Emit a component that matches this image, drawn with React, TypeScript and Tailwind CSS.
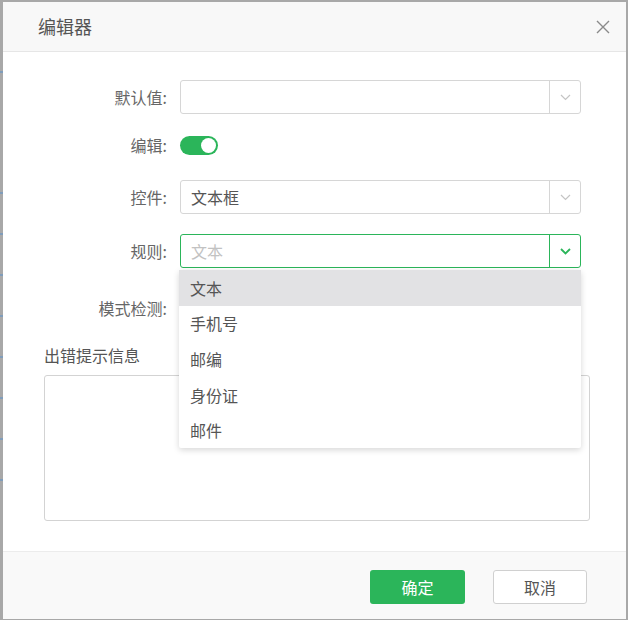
import React from "react";

const FONT = { fontFamily: '"Noto Sans CJK SC", "Noto Sans", sans-serif' };

const RULE_OPTIONS = ["文本", "手机号", "邮编", "身份证", "邮件"];

function Chevron({ active = false }: { active?: boolean }) {
  return (
    <svg width="11" height="7" viewBox="0 0 11 7" fill="none">
      <path
        d="M1 1l4.5 4.5L10 1"
        stroke={active ? "#2bb55a" : "#c4c4c4"}
        strokeWidth={active ? 1.8 : 1.2}
      />
    </svg>
  );
}

function SelectBox({
  value,
  placeholder,
  active = false,
}: {
  value?: string;
  placeholder?: string;
  active?: boolean;
}) {
  const border = active ? "border-[#2bb55a]" : "border-[#d6d6d6]";
  return (
    <div className={`flex w-[401px] h-[34px] border rounded-[3px] bg-white ${border}`}>
      <div className="flex-1 flex items-center pl-[10px] text-[16px]">
        {value ? (
          <span className="text-[#555]">{value}</span>
        ) : (
          <span className="text-[#c2c2c2]">{placeholder}</span>
        )}
      </div>
      <div className={`w-[31px] flex items-center justify-center border-l ${border}`}>
        <Chevron active={active} />
      </div>
    </div>
  );
}

function FormRow({
  label,
  className = "",
  children,
}: {
  label: string;
  className?: string;
  children?: React.ReactNode;
}) {
  return (
    <div className={`flex items-center h-[34px] ${className}`}>
      <div className="w-[177px] pr-[13px] text-right text-[16px] text-[#666]">{label}</div>
      {children}
    </div>
  );
}

function Toggle() {
  return (
    <div className="w-[38px] h-[19px] rounded-full bg-[#2bb55a] flex items-center justify-end pr-[2px]">
      <div className="w-[15px] h-[15px] rounded-full bg-white" />
    </div>
  );
}

function LeftRail() {
  return (
    <div className="w-[3px] bg-[#a8a8a8] flex flex-col">
      <div className="h-[2px] bg-[#7f9cba] mt-[69px]" />
      <div className="flex flex-col gap-[39px] mt-[119px]">
        {[0, 1, 2, 3, 4, 5, 6, 7].map((i) => (
          <div key={i} className="h-[2px] bg-[#7f9cba]" />
        ))}
      </div>
    </div>
  );
}

export default function App() {
  return (
    <div className="w-[628px] h-[620px] bg-[#a8a8a8] flex pt-[2px] pr-[2px] pb-[1px]" style={FONT}>
      <LeftRail />
      <div className="flex-1 flex flex-col bg-white">
        {/* header */}
        <div className="h-[50px] flex items-center justify-between bg-[#f8f8f8] border-b border-[#e6e6e6] pl-[35px] pr-[16px]">
          <span className="text-[18px] text-[#555]">编辑器</span>
          <svg width="14" height="14" viewBox="0 0 14 14">
            <path d="M1 1l12 12M13 1L1 13" stroke="#8a8a8a" strokeWidth="1.4" />
          </svg>
        </div>

        {/* body */}
        <div className="relative flex flex-col">
          <FormRow label="默认值:" className="mt-[28px]">
            <SelectBox />
          </FormRow>
          <FormRow label="编辑:" className="mt-[14px]">
            <Toggle />
          </FormRow>
          <FormRow label="控件:" className="mt-[18px]">
            <SelectBox value="文本框" />
          </FormRow>
          <div className="relative">
            <FormRow label="规则:" className="mt-[20px]">
              <SelectBox placeholder="文本" active />
            </FormRow>
            {/* open dropdown menu */}
            <div className="absolute left-[176px] top-[56px] w-[402px] z-10 bg-white rounded-[2px] shadow-[0_2px_6px_rgba(0,0,0,0.16)]">
              {RULE_OPTIONS.map((opt, i) => (
                <div
                  key={opt}
                  className={`h-[35.6px] flex items-center pl-[11px] text-[16px] text-[#555] ${
                    i === 0 ? "bg-[#e2e2e4]" : ""
                  }`}
                >
                  {opt}
                </div>
              ))}
            </div>
          </div>
          <FormRow label="模式检测:" className="mt-[23px]" />

          <div className="mt-[20px] pl-[41px] text-[16px] text-[#555] leading-[20px]">出错提示信息</div>
          <div className="mt-[10px] ml-[41px] w-[546px] h-[146px] border border-[#d3d3d3] rounded-[3px]" />
        </div>

        {/* footer */}
        <div className="mt-auto h-[68px] flex justify-end items-start gap-[28px] pt-[18px] pr-[39px] bg-[#f9f9f9] border-t border-[#ececec]">
          <button className="w-[95px] h-[34px] rounded-[3px] bg-[#2bb55a] text-white text-[16px]">确定</button>
          <button className="w-[94px] h-[34px] rounded-[3px] bg-white border border-[#d0d0d0] text-[#555] text-[16px]">
            取消
          </button>
        </div>
      </div>
    </div>
  );
}
